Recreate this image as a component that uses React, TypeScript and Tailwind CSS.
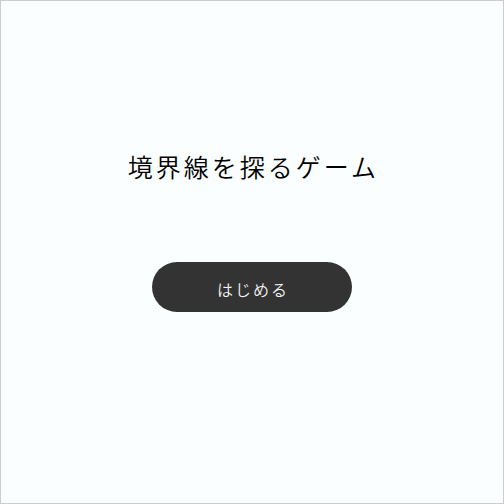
export default function App() {
  return (
    <div
      className="w-[504px] h-[504px] border border-[#cccccc] bg-[#fbfefe] flex flex-col items-center"
      style={{ fontFamily: '"Noto Sans CJK JP", "Noto Sans", sans-serif' }}
    >
      <h1 className="mt-[147px] text-[25px] leading-[36px] tracking-[3px] text-black font-[350] pl-[3px]">
        境界線を探るゲーム
      </h1>
      <button className="mt-[78px] w-[200px] h-[50px] rounded-full bg-[#333333] text-[#f2f2f2] text-[16px] tracking-[2px] pl-[2px] pt-[3px] font-[350]">
        はじめる
      </button>
    </div>
  );
}
